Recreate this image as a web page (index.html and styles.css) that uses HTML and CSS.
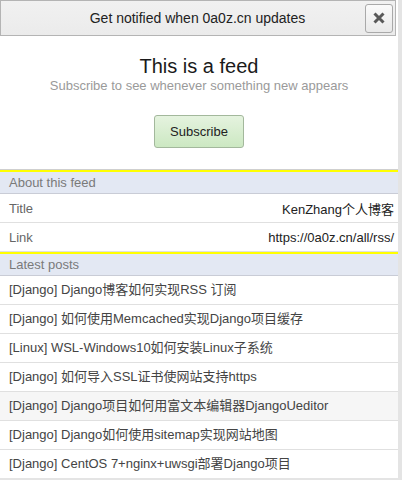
FILE: index.html
```html
<!DOCTYPE html>
<html>
<head>
<meta charset="utf-8">
<link rel="stylesheet" href="styles.css">
</head>
<body>
<div class="popup">
  <div class="topbar">
    <span class="spacer"></span>
    <span class="topbar-title">Get notified when 0a0z.cn updates</span>
    <button class="close" type="button"><svg width="12" height="12" viewBox="0 0 12 12"><path d="M1.5 1.5 L10.5 10.5 M10.5 1.5 L1.5 10.5" stroke="#595959" stroke-width="3" stroke-linecap="butt"/></svg></button>
  </div>
  <div class="intro">
    <h1 class="intro-title">This is a feed</h1>
    <p class="intro-sub">Subscribe to see whenever something new appears</p>
    <button class="subscribe" type="button">Subscribe</button>
  </div>
  <div class="sec-head">About this feed</div>
  <div class="row"><span class="label">Title</span><span class="value">KenZhang个人博客</span></div>
  <div class="row"><span class="label">Link</span><span class="value">https://0a0z.cn/all/rss/</span></div>
  <div class="sec-head">Latest posts</div>
  <div class="post">[Django] Django博客如何实现RSS 订阅</div>
  <div class="post">[Django] 如何使用Memcached实现Django项目缓存</div>
  <div class="post">[Linux] WSL-Windows10如何安装Linux子系统</div>
  <div class="post">[Django] 如何导入SSL证书使网站支持https</div>
  <div class="post post-hover">[Django] Django项目如何用富文本编辑器DjangoUeditor</div>
  <div class="post">[Django] Django如何使用sitemap实现网站地图</div>
  <div class="post">[Django] CentOS 7+nginx+uwsgi部署Django项目</div>
</div>
</body>
</html>
```
FILE: styles.css
```css
* { box-sizing: border-box; }
html, body { margin: 0; padding: 0; }
body {
  background: #e4e4e4;
  font-family: "Liberation Sans", Arial, "Noto Sans CJK SC", sans-serif;
  width: 402px;
  height: 480px;
  overflow: hidden;
}
.popup {
  width: 398px;
  height: 478px;
  background: #fff;
  overflow: hidden;
}
.topbar {
  width: 396px;
  height: 36px;
  border: 1px solid #b4b4b4;
  background: linear-gradient(#f1f1f1, #ebebeb);
  display: grid;
  grid-template-columns: 30px 1fr 30px;
  align-items: center;
  padding: 0 1px 0 0;
}
.topbar-title {
  text-align: center;
  font-size: 14px;
  color: #222;
}
.close {
  width: 28px;
  height: 29px;
  margin: 0 0 0 1px;
  padding: 0;
  border: 1px solid #a9a9a9;
  border-radius: 3px;
  background: linear-gradient(#fafafa, #e9e9e9);
  display: flex;
  align-items: center;
  justify-content: center;
}
.intro {
  text-align: center;
  padding: 18px 0 20px;
  border-bottom: 1px solid #cfcfcf;
  height: 134px;
}
.intro-title {
  margin: 0;
  font-size: 20px;
  line-height: 24px;
  font-weight: normal;
  color: #1a1a1a;
}
.intro-sub {
  margin: 0;
  font-size: 13px;
  line-height: 16px;
  color: #9a9a9a;
}
.subscribe {
  margin-top: 21px;
  width: 90px;
  height: 33px;
  border: 1px solid #a3b89c;
  border-radius: 3px;
  background: linear-gradient(#e5f3df, #cce8c2);
  font-family: "Liberation Sans", Arial, sans-serif;
  font-size: 13px;
  color: #222;
  padding: 0;
}
.sec-head {
  border-top: 2px solid #ffff00;
  border-bottom: 1px solid #c9ccd6;
  background: #e3e8f3;
  height: 24px;
  line-height: 21px;
  padding-left: 9px;
  font-size: 13px;
  color: #7a7a7a;
}
.row {
  display: flex;
  justify-content: space-between;
  align-items: center;
  height: 29px;
  border-bottom: 1px solid #e0e0e0;
  padding: 0 4px 0 9px;
  font-size: 13px;
}
.label { color: #666; }
.value { color: #222; }
.post {
  height: 29px;
  line-height: 28px;
  border-bottom: 1px solid #e0e0e0;
  padding-left: 9px;
  font-size: 13px;
  color: #444;
  white-space: nowrap;
}
.post-hover { background: #f6f6f6; }
```
